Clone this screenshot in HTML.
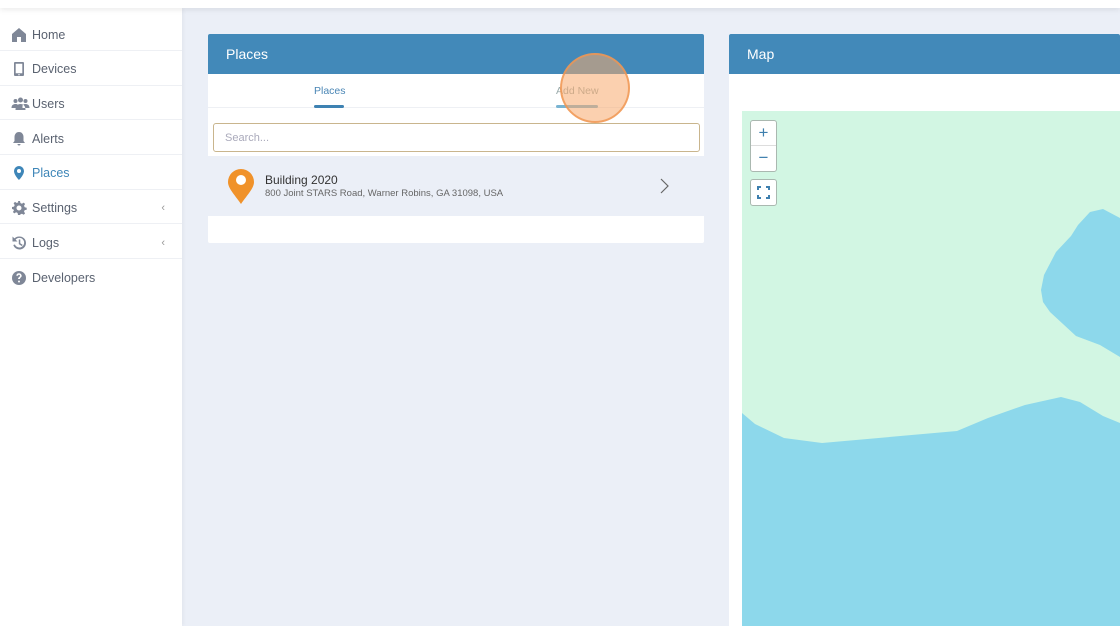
<!DOCTYPE html>
<html><head><style>
*{margin:0;padding:0;box-sizing:border-box}
body{width:1120px;height:626px;overflow:hidden;background:#ebeff7;font-family:"Liberation Sans",sans-serif;position:relative}
.top{position:absolute;left:0;top:0;width:1120px;height:8px;background:#fff;box-shadow:0 2px 6px rgba(0,0,0,.08);z-index:2}
.side{position:absolute;left:0;top:8px;width:182px;height:618px;background:#fff;box-shadow:1px 0 4px rgba(0,0,0,.05)}
.item{height:34.7px;border-bottom:1px solid #eef0f4;display:flex;align-items:center;padding-left:11px;padding-top:3px;font-size:12.5px;color:#5a6270;position:relative}
.item svg{width:16px;height:16px;margin-right:5px;fill:#7f8797}
.item.act{color:#3e86b8}.item.act svg{fill:#3e86b8}
.chev{position:absolute;right:17px;color:#999;font-size:11px}
.card{position:absolute;left:208px;top:34px;width:496px;height:209px;background:#fff;border-radius:2px}
.hdr{height:40px;background:#4289b9;color:#fff;font-size:14px;padding-left:18px;line-height:40px;border-radius:2px 2px 0 0}
.map{position:absolute;left:729px;top:34px;width:391px;height:592px;background:#fff}
</style></head><body>
<div class="top"></div>
<div class="side">
<div class="item" style="height:43px;padding-top:11px"><svg viewBox="0 0 16 16"><path d="M8 1L1 7v8h5v-5h4v5h5V7z"/></svg>Home</div>
<div class="item"><svg viewBox="0 0 16 16"><path d="M4 1h8a1 1 0 0 1 1 1v12a1 1 0 0 1-1 1H4a1 1 0 0 1-1-1V2a1 1 0 0 1 1-1zm.7 1.7v9.6h6.6V2.7zM8 13a.7.7 0 1 0 0 1.4A.7.7 0 0 0 8 13z"/></svg>Devices</div>
<div class="item"><svg viewBox="0 0 18 16" style="width:19px;margin-right:2px"><circle cx="4" cy="5" r="2"/><circle cx="14" cy="5" r="2"/><circle cx="9" cy="4" r="2.5"/><path d="M0 12c0-3 2-4 4-4s3 1 3 2v2zM18 12c0-3-2-4-4-4s-3 1-3 2v2zM4 14c0-4 2-6 5-6s5 2 5 6z"/></svg>Users</div>
<div class="item"><svg viewBox="0 0 16 16"><path d="M8 1c-3 0-4.5 2.5-4.5 5v4L2 12h12l-1.5-2V6C12.5 3.5 11 1 8 1zM6.5 13a1.5 1.5 0 0 0 3 0z"/></svg>Alerts</div>
<div class="item act"><svg viewBox="0 0 16 16"><path d="M8 1a5 5 0 0 0-5 5c0 4 5 9 5 9s5-5 5-9a5 5 0 0 0-5-5zm0 3a2 2 0 1 1 0 4 2 2 0 0 1 0-4z"/></svg>Places</div>
<div class="item"><svg viewBox="0 0 16 16"><path d="M7 1h2l.4 2 1.5.7 1.8-1.1 1.4 1.4-1.1 1.8.7 1.5 2 .4v2l-2 .4-.7 1.5 1.1 1.8-1.4 1.4-1.8-1.1-1.5.7L9 15H7l-.4-2-1.5-.7-1.8 1.1-1.4-1.4 1.1-1.8L2.3 9.4 1 9V7l2-.4.7-1.5-1.1-1.8L4 1.9l1.8 1.1 1.5-.7zM8 5.5a2.5 2.5 0 1 0 0 5 2.5 2.5 0 0 0 0-5z"/></svg>Settings<span class="chev">&lsaquo;</span></div>
<div class="item"><svg viewBox="0 0 16 16"><path d="M8.5 1.5a6.5 6.5 0 1 1-6.2 8.5l1.6-.5A4.8 4.8 0 1 0 4.6 4.6L6.5 6.5H1.5v-5l1.9 1.9A6.5 6.5 0 0 1 8.5 1.5zM7.8 4.5h1.5v3.8l2.4 1.6-.8 1.2-3.1-2z"/></svg>Logs<span class="chev">&lsaquo;</span></div>
<div class="item" style="border:none"><svg viewBox="0 0 16 16"><path d="M8 1a7 7 0 1 0 0 14A7 7 0 0 0 8 1zm0 11.5a1 1 0 1 1 0-2 1 1 0 0 1 0 2zm1-3.5H7c0-2 2-2 2-3.3a1 1 0 0 0-2 0H5.3A2.7 2.7 0 0 1 8 3.3a2.6 2.6 0 0 1 2.7 2.5C10.7 7.5 9 7.5 9 9z"/></svg>Developers</div>
</div>

<div class="card">
<div class="hdr">Places</div>
<div style="height:34px;border-bottom:1px solid #eef0f4;position:relative;font-size:10.5px">
<div style="position:absolute;left:106px;top:11px;color:#4a86b5">Places</div>
<div style="position:absolute;left:106px;top:31px;width:30px;height:3px;background:#3e82b2;border-radius:2px"></div>
<div style="position:absolute;left:348px;top:11px;color:#9aa">Add New</div>
<div style="position:absolute;left:348px;top:31px;width:42px;height:3px;background:#79b4d2;border-radius:2px"></div>
</div>
<div style="position:absolute;left:5px;top:89px;width:487px;height:29px;border:1px solid #c9b58d;border-radius:3px;font-size:11px;color:#aab;padding:8px 11px">Search...</div>
<div style="position:absolute;left:0;top:122px;width:496px;height:60px;background:#ebeff7">
<svg style="position:absolute;left:20px;top:13px" width="26" height="35" viewBox="0 0 26 35"><path d="M13 0A13 13 0 0 0 0 13c0 6 6 12 13 22 7-10 13-16 13-22A13 13 0 0 0 13 0z" fill="#f0922a"/><circle cx="13" cy="11" r="5" fill="#fff"/></svg>
<div style="position:absolute;left:57px;top:17px;font-size:12px;color:#333">Building 2020</div>
<div style="position:absolute;left:57px;top:32px;font-size:9.5px;color:#666">800 Joint STARS Road, Warner Robins, GA 31098, USA</div>
<svg style="position:absolute;left:451px;top:22px" width="10" height="16" viewBox="0 0 10 16"><path d="M2 1l7 7-7 7" stroke="#666" stroke-width="1.2" fill="none"/></svg>
</div>
</div>
<div style="position:absolute;left:560px;top:53px;width:70px;height:70px;border-radius:50%;background:rgba(248,170,110,.55);border:2px solid rgba(240,150,80,.8)"></div>

<div class="map">
<div class="hdr">Map</div>
<svg style="position:absolute;left:13px;top:77px" width="378" height="515" viewBox="742 111 378 515">
<rect x="742" y="111" width="378" height="515" fill="#d2f6e3"/>
<path d="M1120 218L1103 209 1090 212 1078 225 1071 236 1056 252 1044 275 1041 290 1043 302 1050 312 1076 336 1100 345 1120 357z" fill="#8dd8eb"/>
<path d="M742 413L755 424 784 438 822 443 957 431 988 418 1025 405 1061 397 1080 402 1103 416 1120 423 1120 626 742 626z" fill="#8dd8eb"/>
</svg>
<div style="position:absolute;left:21px;top:86px;width:27px;height:52px;background:#fff;border:1px solid #aab8b0;border-radius:3px;color:#3e7fae;text-align:center;font-size:17px;line-height:24px">+<div style="border-top:1px solid #ddd">&minus;</div></div>
<div style="position:absolute;left:21px;top:145px;width:27px;height:27px;background:#fff;border:1px solid #aab8b0;border-radius:3px"><svg width="25" height="25" viewBox="0 0 25 25" fill="none" stroke="#3e7fae" stroke-width="2"><path d="M7 10V7h3M15 7h3v3M18 15v3h-3M10 18H7v-3"/></svg></div>
</div>
</body></html>
